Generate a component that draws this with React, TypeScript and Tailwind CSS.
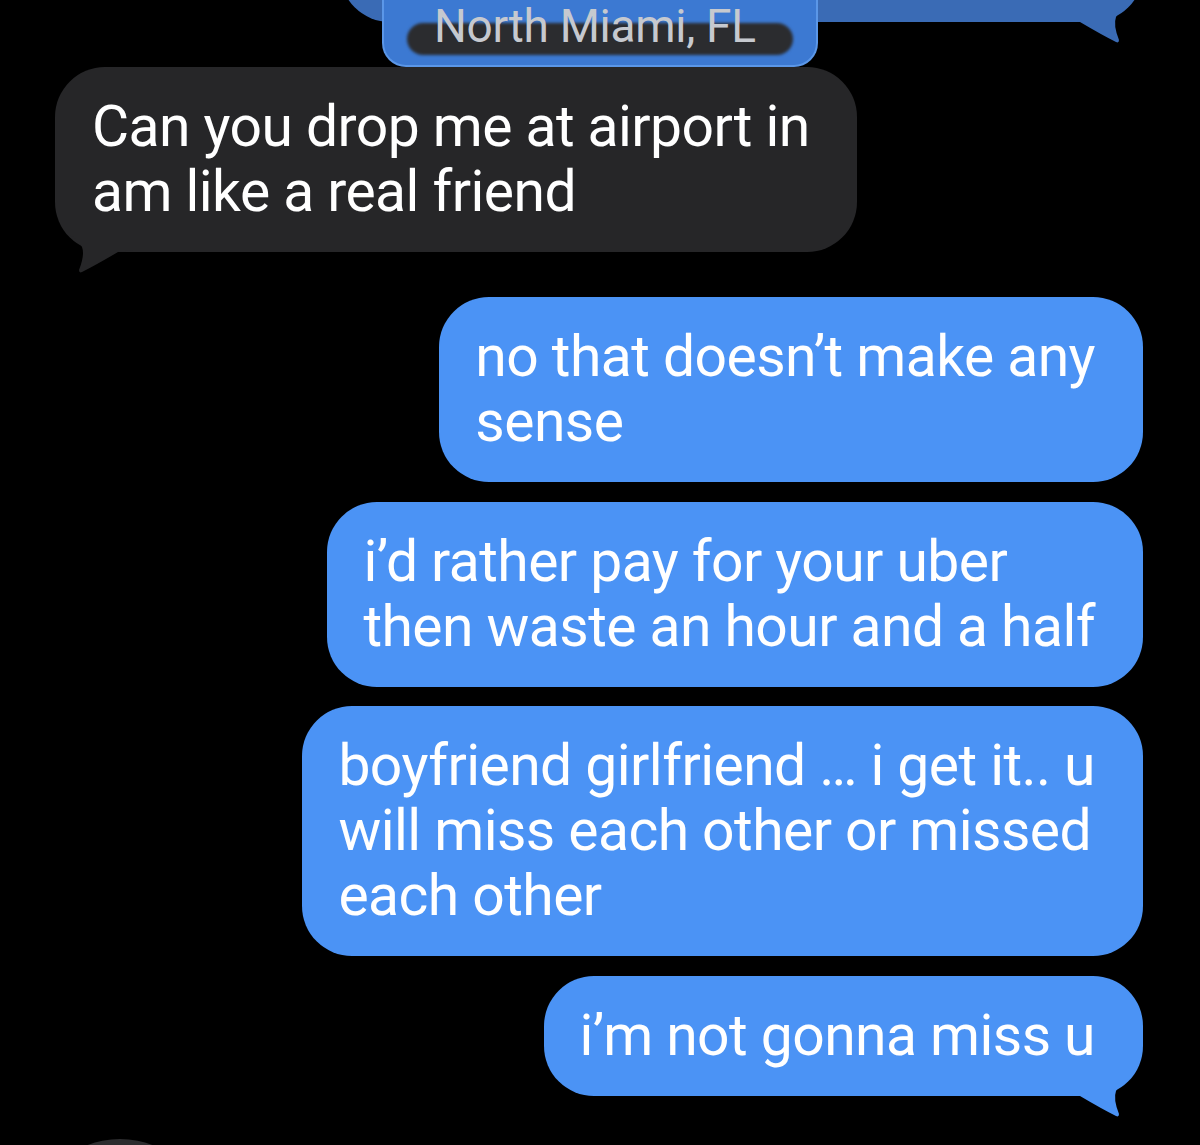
import React from 'react';
import clsx from 'clsx';

// bubble tail, drawn for the right side; mirrored for received bubbles
function Tail({ side, fill }: { side: 'left' | 'right'; fill: string }) {
  return (
    <svg
      viewBox="0 0 83 40"
      className={clsx(
        'absolute -bottom-[23px] h-[40px] w-[83px]',
        side === 'right' ? 'right-0' : 'left-0 -scale-x-100',
        fill
      )}
    >
      <path d="M5 15 L20 17 Q42 30 56 37 Q59 38.5 59 35 Q53 20 56 12 Q60 3 69 0 L5 0 Z" />
    </svg>
  );
}

function Sent({ lines, tail, className }: { lines: string[]; tail?: boolean; className?: string }) {
  return (
    <div
      className={clsx(
        'relative w-fit self-end whitespace-nowrap rounded-[50px] bg-[#4b93f5] pl-[36px] pr-[48px] pt-[27px] pb-[28px] text-white',
        className
      )}
    >
      {lines.map((l, i) => (
        <div key={i}>{l}</div>
      ))}
      {tail && <Tail side="right" fill="fill-[#4b93f5]" />}
    </div>
  );
}

export default function App() {
  return (
    <div className="h-[1145px] overflow-hidden bg-black font-['Roboto',sans-serif] text-[57px] leading-[65px] tracking-[-0.55px]">
      {/* location card cut off at the top */}
      <div className="relative h-[67px]">
        <div className="absolute bottom-[45px] left-[340px] right-[57px] h-[120px] rounded-[50px] bg-[#3a6bb5]">
          <Tail side="right" fill="fill-[#3a6bb5]" />
        </div>
        <div className="relative ml-[382px] h-[67px] w-[436px] rounded-b-[24px] border-x-2 border-b-2 border-[#5b97e8] bg-[#3c79d2]">
          <div className="absolute left-[23px] right-[23px] top-[23px] h-[32px] rounded-full bg-[#2b2c2f] blur-[1.5px]" />
          <div className="relative pl-[50px] pt-[4px] text-[46px] leading-[44px] tracking-[-0.3px] text-[#c6c9cf]">
            North Miami, FL
          </div>
        </div>
      </div>

      <div className="flex flex-col pl-[55px] pr-[57px]">
        <div className="relative w-fit whitespace-nowrap rounded-[50px] bg-[#262628] pl-[37px] pr-[47px] pt-[27px] pb-[28px] text-white">
          <div>Can you drop me at airport in</div>
          <div>am like a real friend</div>
          <Tail side="left" fill="fill-[#262628]" />
        </div>

        <Sent className="mt-[45px]" lines={['no that doesn’t make any', 'sense']} />
        <Sent className="mt-[20px]" lines={['i’d rather pay for your uber', 'then waste an hour and a half']} />
        <Sent
          className="mt-[19px]"
          lines={['boyfriend girlfriend … i get it.. u', 'will miss each other or missed', 'each other']}
        />
        <Sent className="mt-[20px]" lines={['i’m not gonna miss u']} tail />

        {/* next bubble just peeking in */}
        <div className="-ml-[25px] mt-[43px] h-[180px] w-[180px] shrink-0 rounded-full bg-[#2c2c2e]" />
      </div>
    </div>
  );
}
